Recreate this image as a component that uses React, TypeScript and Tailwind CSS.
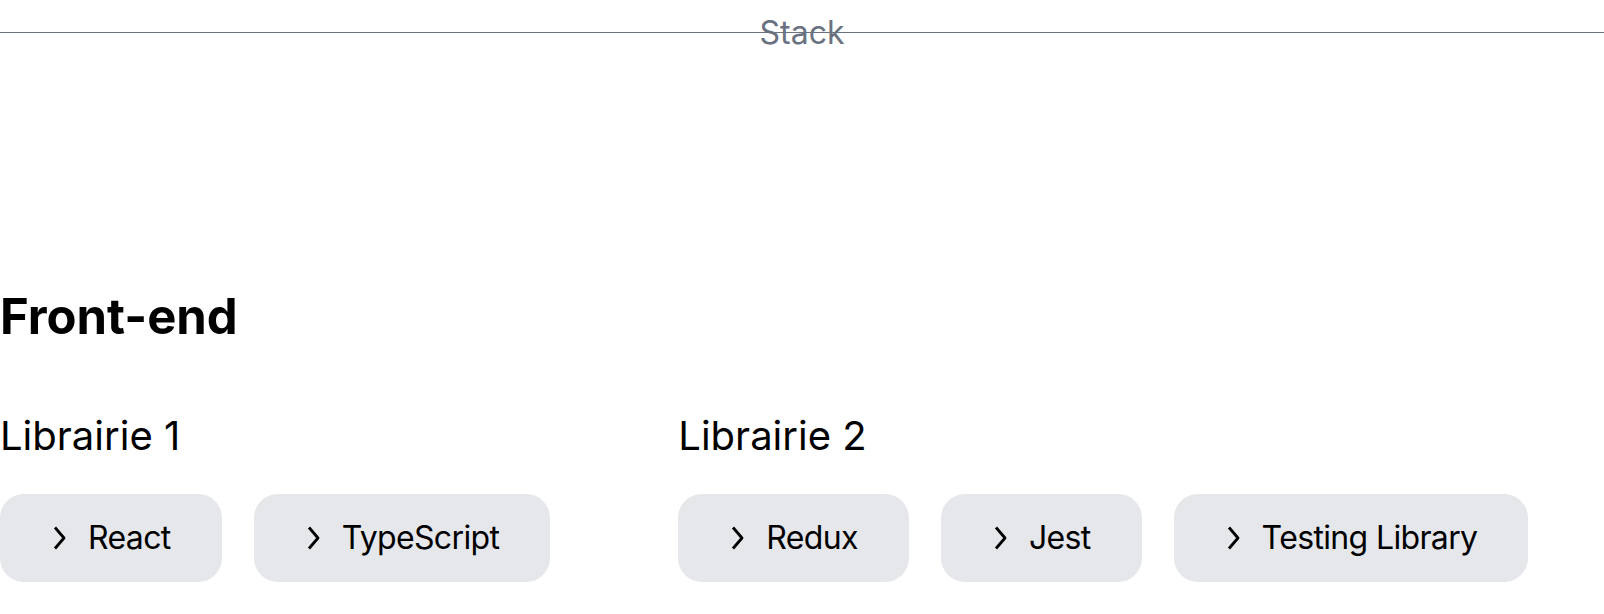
import React from "react";

function Chevron() {
  return (
    <svg width="18" height="24" viewBox="0 0 18 24" fill="none" className="shrink-0">
      <polyline points="7,1.5 16,12 7,22.5" stroke="#000" strokeWidth="2.8" strokeLinecap="butt" strokeLinejoin="round" />
    </svg>
  );
}

function Tag({ label }: { label: string }) {
  return (
    <div className="flex items-center gap-[22px] rounded-3xl bg-gray-200 py-6 pl-12 pr-[51px] text-[32px] leading-10 tracking-[-0.02em] text-black">
      <Chevron />
      <span>{label}</span>
    </div>
  );
}

export default function App() {
  return (
    <div className="min-h-screen bg-white pt-8 font-['Inter',sans-serif] text-black">
      <div className="relative border-t border-gray-500">
        <span className="absolute left-1/2 top-0 -translate-x-1/2 -translate-y-1/2 text-[32px] leading-none text-gray-500">
          Stack
        </span>
      </div>
      <h2 className="mt-[259px] text-[49px] font-bold leading-none">Front-end</h2>
      <div className="mt-[75px] flex gap-32">
        <div>
          <h3 className="text-[40px] leading-none">Librairie 1</h3>
          <div className="mt-[38px] flex gap-8">
            <Tag label="React" />
            <Tag label="TypeScript" />
          </div>
        </div>
        <div>
          <h3 className="text-[40px] leading-none">Librairie 2</h3>
          <div className="mt-[38px] flex gap-8">
            <Tag label="Redux" />
            <Tag label="Jest" />
            <Tag label="Testing Library" />
          </div>
        </div>
      </div>
    </div>
  );
}
